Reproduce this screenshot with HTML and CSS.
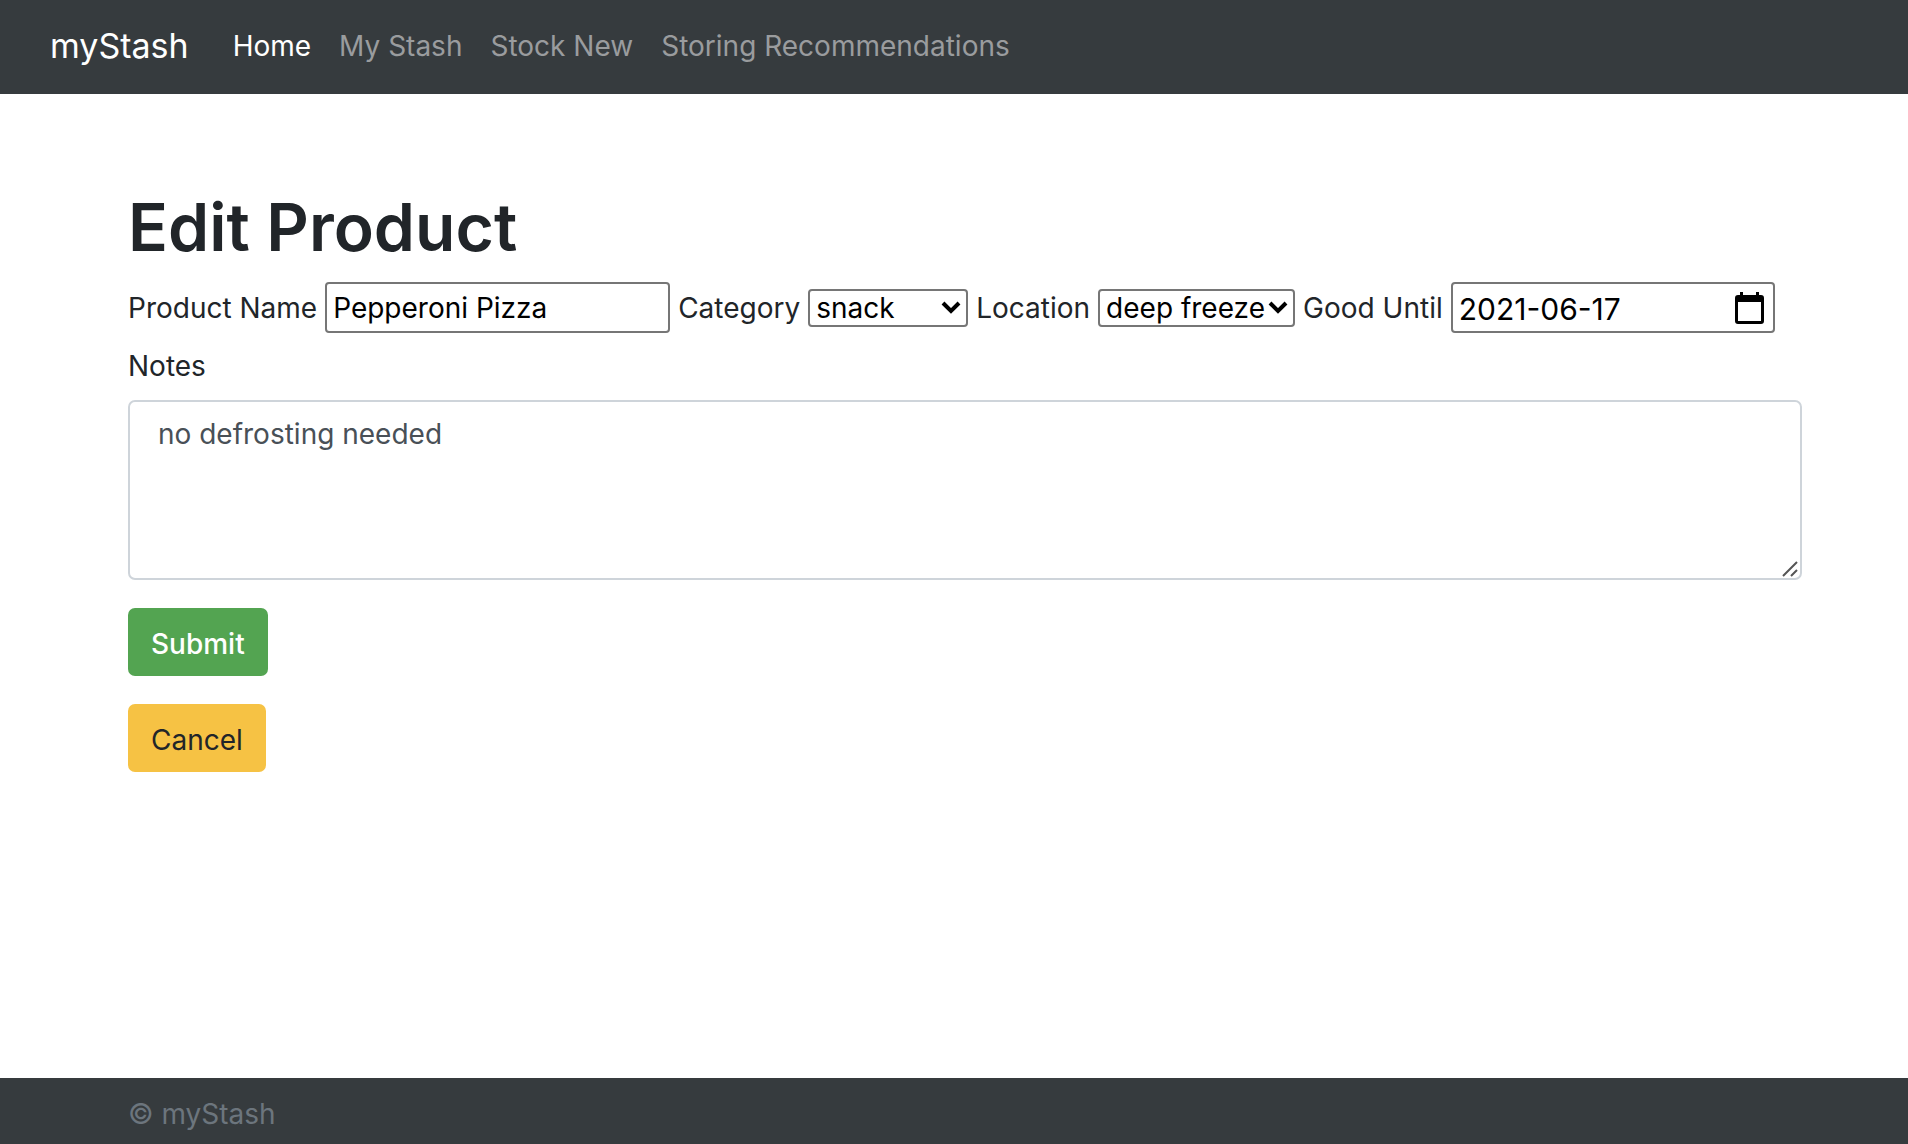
FILE: index.html
```html
<!DOCTYPE html>
<html lang="en">
<head>
<meta charset="utf-8">
<title>myStash</title>
<link rel="stylesheet" href="styles.css">
</head>
<body>
<nav class="navbar">
  <a class="brand" href="#">myStash</a>
  <a class="nav-link active" href="#">Home</a>
  <a class="nav-link" href="#">My Stash</a>
  <a class="nav-link" href="#">Stock New</a>
  <a class="nav-link" href="#">Storing Recommendations</a>
</nav>
<main class="content">
  <h1 class="title">Edit Product</h1>
  <form class="form">
    <div class="fields">
      <label for="name">Product Name</label>
      <input class="control name" id="name" type="text" value="Pepperoni Pizza">
      <label for="category">Category</label>
      <span class="select-wrap">
        <select class="select category" id="category"><option>snack</option></select>
        <svg class="chevron" viewBox="0 0 20 14" aria-hidden="true"><path d="M2 2l8 8 8-8" fill="none" stroke="#000" stroke-width="4"/></svg>
      </span>
      <label for="location">Location</label>
      <span class="select-wrap">
        <select class="select location" id="location"><option>deep freeze</option></select>
        <svg class="chevron" viewBox="0 0 20 14" aria-hidden="true"><path d="M2 2l8 8 8-8" fill="none" stroke="#000" stroke-width="4"/></svg>
      </span>
      <label for="until">Good Until</label>
      <span class="control date">
        <input class="date-input" id="until" type="text" value="2021-06-17">
        <button class="picker" type="button" aria-label="Choose date"><svg class="calendar" viewBox="0 0 29 32" aria-hidden="true"><path d="M5 0h3v3h13V0h3v3h2a3 3 0 0 1 3 3v23a3 3 0 0 1-3 3H3a3 3 0 0 1-3-3V6a3 3 0 0 1 3-3h2zM3 10v19h23V10z" fill="#000" fill-rule="evenodd"/></svg></button>
      </span>
    </div>
    <label class="notes-label" for="notes">Notes</label>
    <div class="notes-wrap">
      <textarea class="notes" id="notes">no defrosting needed</textarea>
      <svg class="grip" viewBox="0 0 16 16" aria-hidden="true"><path d="M1 15L15 1M9 15l6-6" fill="none" stroke="#555" stroke-width="2"/></svg>
    </div>
    <button class="btn submit" type="submit">Submit</button>
    <button class="btn cancel" type="button">Cancel</button>
  </form>
</main>
<footer class="footer">© myStash</footer>
</body>
</html>
```
FILE: styles.css
```css
* { box-sizing: border-box; }
body {
  margin: 0;
  min-height: 100vh;
  display: flex;
  flex-direction: column;
  background: #fff;
  color: #212529;
  font: 28px/44px Inter, "Liberation Sans", sans-serif;
}
input, select, textarea, button { font: inherit; color: #000; }
.navbar {
  display: flex;
  align-items: center;
  gap: 28px;
  padding: 0 50px 2px;
  height: 94px;
  background: #363b3e;
}
.brand, .nav-link { text-decoration: none; white-space: nowrap; }
.brand { margin-right: 16px; color: #fff; font-size: 34px; }
.nav-link { color: #9a9c9e; }
.nav-link.active { color: #fff; }
.content { flex: 1; padding: 90px 106px 28px 128px; }
.title { margin: 0 0 12px; font-size: 66px; line-height: 86px; font-weight: 600; }
.form { display: flex; flex-direction: column; align-items: flex-start; }
.fields { display: flex; flex-wrap: wrap; align-items: center; gap: 8px; white-space: nowrap; }
.control {
  height: 51px;
  padding: 0 6px;
  border: 2px solid #767676;
  border-radius: 4px;
  background: #fff;
}
.name { width: 345px; }
.select-wrap { position: relative; display: flex; }
.select {
  appearance: none;
  height: 38px;
  padding: 0 6px;
  border: 2px solid #767676;
  border-radius: 4px;
  background: #fff;
  line-height: 34px;
}
.category { width: 160px; }
.location { width: 197px; }
.chevron { position: absolute; right: 7px; top: 12px; width: 20px; height: 14px; pointer-events: none; }
.date { display: flex; align-items: center; justify-content: space-between; width: 324px; padding-right: 9px; }
.date-input {
  width: 200px;
  padding: 2px 0 0;
  border: 0;
  background: none;
  font-size: 30px;
}
.picker { display: flex; padding: 0; border: 0; background: none; }
.calendar { width: 29px; height: 32px; }
.notes-label { margin: 11px 0 12px; }
.notes-wrap { position: relative; display: flex; width: 100%; }
.notes {
  flex: 1;
  height: 180px;
  padding: 10px 28px;
  border: 2px solid #ced4da;
  border-radius: 7px;
  background: #fff;
  color: #495057;
  resize: vertical;
}
.notes::-webkit-resizer { background: none; }
.grip { position: absolute; right: 4px; bottom: 3px; width: 16px; height: 16px; pointer-events: none; }
.btn { height: 68px; margin-top: 28px; padding: 4px 23px 0; border: 0; border-radius: 7px; }
.submit { background: #53a451; color: #fff; font-weight: 500; }
.cancel { background: #f6c244; color: #212529; }
.footer { height: 66px; padding: 14px 128px 0; background: #363b3e; color: #6c757d; }
```
